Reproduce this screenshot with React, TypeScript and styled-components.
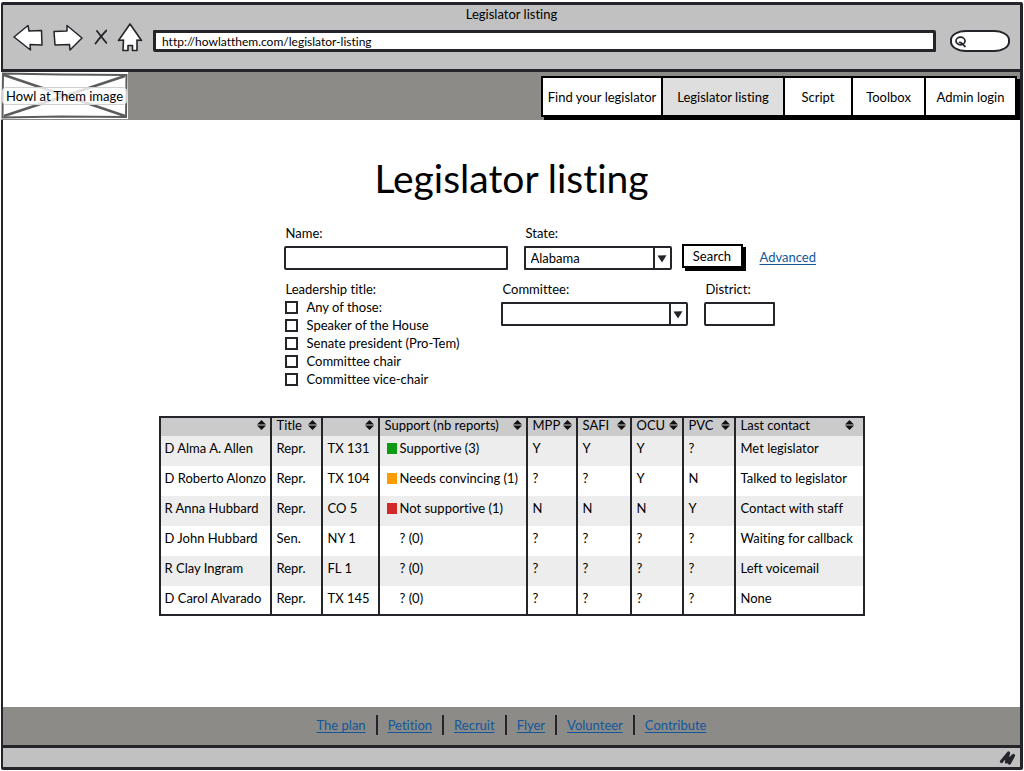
import React from "react";
import styled, { createGlobalStyle } from "styled-components";

const ink = "#24252b";
const chrome = "#c1c1c1";
const band = "#8d8b88";
const link = "#10579c";

const GlobalStyle = createGlobalStyle`
  *, *::before, *::after { box-sizing: border-box; }
  body { margin: 0; background: #fff; }
  body, button, input, select {
    font-family: Lato, "Liberation Sans", sans-serif;
    font-size: 13px;
    line-height: 16px;
    font-variant-ligatures: none;
    color: #000;
  }
`;

const Window = styled.div`
  display: flex;
  flex-direction: column;
  min-height: calc(100vh - 3px);
  margin: 2px 1px 1px;
  border: 3px solid ${ink};
  border-width: 3px 3px 3px 2px;
  border-radius: 2px;
  background: #fff;
`;

const TitleBar = styled.div`
  height: 67px;
  background: ${chrome};
  border-bottom: 3px solid ${ink};
`;

const WindowTitle = styled.div`
  padding-top: 1px;
  text-align: center;
`;

const Toolbar = styled.div`
  display: flex;
  align-items: flex-end;
  gap: 10px;
  height: 30px;
  padding: 0 10px;
`;

const IconButton = styled.button`
  display: flex;
  padding: 0;
  border: 0;
  background: none;
`;

const UrlInput = styled.input`
  flex: 1;
  min-width: 0;
  height: 22px;
  padding: 0 6px;
  margin-right: 4px;
  border: 3px solid ${ink};
  border-radius: 1px 2px 1px 2px;
  background: #fff;
  font-size: 12px;
`;

const SearchPill = styled.label`
  display: flex;
  align-items: center;
  width: 60px;
  height: 22px;
  padding-left: 3px;
  border: 2px solid ${ink};
  border-radius: 16px / 10px;
  background: #fff;
`;

const PillInput = styled.input`
  flex: 1;
  width: 0;
  padding: 0;
  border: 0;
  background: none;
  outline: none;
`;

const Header = styled.header`
  display: flex;
  justify-content: space-between;
  height: 48px;
  margin-left: -2px;
  background: ${band};
`;

const Logo = styled.div`
  display: grid;
  place-items: center;
  width: 127px;
  height: 47px;
  background: #fff;
  > * { grid-area: 1 / 1; }
`;

const LogoLabel = styled.span`
  width: 125px;
  border: 1px solid #d0d0d0;
  border-radius: 4px;
  background: rgba(255, 255, 255, 0.8);
  text-align: center;
  white-space: nowrap;
`;

const Nav = styled.nav`
  display: flex;
  height: 41px;
  margin: 4px 3px 0 0;
  border: 2px solid #000;
  background: #fff;
  box-shadow: 3px 3px 0 #000;
`;

const NavLink = styled.a<{ $width: number; $active?: boolean }>`
  display: flex;
  align-items: center;
  justify-content: center;
  width: ${(p) => p.$width}px;
  background: ${(p) => (p.$active ? "#dedede" : "#fff")};
  color: #000;
  text-decoration: none;
  white-space: nowrap;
  & + & { border-left: 2px solid #000; }
`;

const Main = styled.main`
  flex: 1;
  width: 706px;
  max-width: 100%;
  margin: 0 auto;
  padding-bottom: 40px;
`;

const Heading = styled.h1`
  margin: 34px 0 23px;
  font-size: 39px;
  line-height: 48px;
  font-weight: 400;
  text-align: center;
`;

const Form = styled.form`
  padding-left: 125px;
`;

const FormRow = styled.div`
  display: flex;
  align-items: flex-end;
  gap: 16px;
  margin-bottom: 11px;
`;

const FilterRow = styled.div`
  display: flex;
  align-items: flex-start;
  gap: 16px;
`;

const Field = styled.label<{ $width: number }>`
  display: flex;
  flex-direction: column;
  gap: 5px;
  width: ${(p) => p.$width}px;
`;

const FieldName = styled.span`
  padding-left: 2px;
`;

const TextInput = styled.input`
  width: 100%;
  height: 24px;
  padding: 0 5px;
  border: 2px solid ${ink};
  border-radius: 2px 1px 1px 2px;
  background: #fff;
`;

const SelectBox = styled.span`
  display: flex;
  height: 24px;
  border: 2px solid ${ink};
  border-radius: 1px 2px 2px 1px;
`;

const Select = styled.select`
  flex: 1;
  min-width: 0;
  padding: 0 5px;
  border: 0;
  background: #fff;
  appearance: none;
`;

const SelectArrow = styled.span`
  display: flex;
  align-items: center;
  justify-content: center;
  width: 17px;
  border-left: 2px solid ${ink};
`;

const SearchButton = styled.button`
  width: 61px;
  height: 24px;
  margin: 0 3px 2px -6px;
  padding: 0;
  border: 2px solid #000;
  background: #fff;
  box-shadow: 3px 3px 0 #000;
`;

const TextLink = styled.a`
  color: ${link};
  text-decoration: underline;
  text-underline-offset: 2px;
`;

const AdvancedLink = styled(TextLink)`
  margin-bottom: 5px;
  margin-left: -2px;
`;

const Fieldset = styled.fieldset`
  width: 201px;
  margin: 0;
  padding: 0;
  border: 0;
`;

const Legend = styled.legend`
  padding: 0 0 1px 2px;
`;

const CheckRow = styled.label`
  display: flex;
  align-items: center;
  gap: 9px;
  height: 18px;
  padding-left: 1px;
`;

const Checkbox = styled.input`
  width: 13px;
  height: 13px;
  margin: 0;
  border: 2px solid ${ink};
  background: #fff;
  appearance: none;
  &:checked { background: ${ink}; }
`;

const Table = styled.table`
  width: 100%;
  margin-top: 28px;
  border: 2px solid ${ink};
  border-collapse: separate;
  border-spacing: 0;
  table-layout: fixed;
`;

const Col = styled.col<{ $width: number }>`
  width: ${(p) => p.$width}px;
`;

const HeadCell = styled.th`
  height: 18px;
  padding: 0 4px 4px;
  background: #cbcbcb;
  font-weight: 400;
  line-height: 14px;
  text-align: left;
  white-space: nowrap;
  & + & {
    padding-left: 5px;
    border-left: 2px solid ${ink};
  }
  &:last-child { padding-right: 9px; }
`;

const HeadContent = styled.div`
  display: flex;
  justify-content: space-between;
  align-items: center;
  height: 14px;
`;

const Row = styled.tr`
  &:nth-child(odd) { background: #ededed; }
`;

const Cell = styled.td`
  height: 30px;
  padding: 4px 0 10px 4px;
  white-space: nowrap;
  & + & {
    padding-left: 5px;
    border-left: 2px solid ${ink};
  }
  tr:last-child > & { height: 28px; padding-bottom: 8px; }
`;

const Support = styled.span`
  display: flex;
  align-items: center;
  gap: 3px;
  padding-left: 2px;
`;

const Swatch = styled.span<{ $color: string }>`
  width: 10px;
  height: 11px;
  background: ${(p) => p.$color};
`;

const Footer = styled.footer`
  display: flex;
  align-items: center;
  justify-content: center;
  height: 38px;
  padding-bottom: 2px;
  background: ${band};
`;

const FooterLink = styled(TextLink)`
  margin: 0 10px;
`;

const Divider = styled.span`
  width: 2px;
  height: 20px;
  background: ${ink};
`;

const StatusBar = styled.div`
  display: flex;
  align-items: center;
  justify-content: flex-end;
  height: 22px;
  padding-right: 4px;
  border-top: 3px solid ${ink};
  background: ${chrome};
`;

const BackIcon = () => (
  <svg width="30" height="28" viewBox="0 0 30 28" fill="#fff" stroke={ink} strokeWidth="1.5" strokeLinejoin="round">
    <path d="M1 13 15 1.500l1 5.500 12.500-.500.500 14.500-12-.500.500 5.500Z" />
  </svg>
);

const ForwardIcon = () => (
  <svg width="30" height="28" viewBox="0 0 30 28" fill="#fff" stroke={ink} strokeWidth="1.5" strokeLinejoin="round">
    <path d="M1 7.500 14 7V1.500L29 14 17 26l-.500-5.500L2 21Z" />
  </svg>
);

const StopIcon = () => (
  <svg width="14" height="28" viewBox="0 0 14 28" fill="none" stroke={ink} strokeWidth="1.8" strokeLinecap="round">
    <path d="M4 7c3 4 6 8 9.500 12M13.500 6.500C10 10 6 15 2.500 19.500" />
  </svg>
);

const HomeIcon = () => (
  <svg width="26" height="30" viewBox="0 0 26 30" fill="#fff" stroke={ink} strokeWidth="1.6" strokeLinejoin="round">
    <path d="M13 2 1.500 18.500 6.500 18 6 28.500h5V23.500h4.500v5h4.500V18l4.500.500Z" />
  </svg>
);

const MagnifierIcon = () => (
  <svg width="13" height="14" viewBox="0 0 13 14" fill="none" stroke={ink} strokeWidth="1.700" strokeLinecap="round">
    <ellipse cx="5.500" cy="7" rx="4.500" ry="3.800" />
    <path d="M4.500 8.500c2-.500 3 2 5.500 4" />
  </svg>
);

const CrossedBox = () => (
  <svg width="127" height="47" viewBox="0 0 127 47" fill="none" stroke="#5c5c5e" strokeWidth="2" aria-hidden="true">
    <path d="M2 1.500 60 2.500 125.500 3l-.500 42L60 44.500 1.500 45.500Z" />
    <path d="M3 3 124 44M3 44 124 4" strokeWidth="2.500" />
  </svg>
);

const ArrowDown = () => (
  <svg width="10" height="9" viewBox="0 0 10 9" fill={ink} aria-hidden="true">
    <path d="M.5 1.500 9.500 1.300 5 8.500Z" />
  </svg>
);

const SortIcon = () => (
  <svg width="9" height="10" viewBox="0 0 9 10" fill="#111" aria-hidden="true">
    <path d="M0 4.500 4.500 0 9 4.500ZM0 5.500h9L4.500 10Z" />
  </svg>
);

const ResizeGrip = () => (
  <svg width="17" height="16" viewBox="0 0 17 16" fill="none" stroke={ink} strokeWidth="3.200" strokeLinecap="round" strokeLinejoin="round" aria-hidden="true">
    <path d="M2.500 11.500 9.500 3 7.500 12 14.500 5.500 10.500 13" />
  </svg>
);

const navItems = [
  { label: "Find your legislator", width: 118 },
  { label: "Legislator listing", width: 122, active: true },
  { label: "Script", width: 68 },
  { label: "Toolbox", width: 73 },
  { label: "Admin login", width: 91 },
];

const titles = [
  "Any of those:",
  "Speaker of the House",
  "Senate president (Pro-Tem)",
  "Committee chair",
  "Committee vice-chair",
];

const columns = [
  { label: "", width: 109 },
  { label: "Title", width: 51 },
  { label: "", width: 57 },
  { label: "Support (nb reports)", width: 148 },
  { label: "MPP", width: 50 },
  { label: "SAFI", width: 54 },
  { label: "OCU", width: 52 },
  { label: "PVC", width: 52 },
  { label: "Last contact", width: 129 },
];

const legislators = [
  { name: "D Alma A. Allen", title: "Repr.", seat: "TX 131", color: "#0a9b12", support: "Supportive (3)", votes: ["Y", "Y", "Y", "?"], contact: "Met legislator" },
  { name: "D Roberto Alonzo", title: "Repr.", seat: "TX 104", color: "#ff9c00", support: "Needs convincing (1)", votes: ["?", "?", "Y", "N"], contact: "Talked to legislator" },
  { name: "R Anna Hubbard", title: "Repr.", seat: "CO 5", color: "#d22a2a", support: "Not supportive (1)", votes: ["N", "N", "N", "Y"], contact: "Contact with staff" },
  { name: "D John Hubbard", title: "Sen.", seat: "NY 1", color: "transparent", support: "? (0)", votes: ["?", "?", "?", "?"], contact: "Waiting for callback" },
  { name: "R Clay Ingram", title: "Repr.", seat: "FL 1", color: "transparent", support: "? (0)", votes: ["?", "?", "?", "?"], contact: "Left voicemail" },
  { name: "D Carol Alvarado", title: "Repr.", seat: "TX 145", color: "transparent", support: "? (0)", votes: ["?", "?", "?", "?"], contact: "None" },
];

const footerLinks = ["The plan", "Petition", "Recruit", "Flyer", "Volunteer", "Contribute"];

export default function App() {
  return (
    <>
      <GlobalStyle />
      <Window>
        <TitleBar>
          <WindowTitle>Legislator listing</WindowTitle>
          <Toolbar>
            <IconButton aria-label="Back"><BackIcon /></IconButton>
            <IconButton aria-label="Forward"><ForwardIcon /></IconButton>
            <IconButton aria-label="Stop"><StopIcon /></IconButton>
            <IconButton aria-label="Home"><HomeIcon /></IconButton>
            <UrlInput aria-label="Address" defaultValue="http://howlatthem.com/legislator-listing" />
            <SearchPill>
              <MagnifierIcon />
              <PillInput aria-label="Web search" />
            </SearchPill>
          </Toolbar>
        </TitleBar>

        <Header>
          <Logo>
            <CrossedBox />
            <LogoLabel>Howl at Them image</LogoLabel>
          </Logo>
          <Nav>
            {navItems.map((n) => (
              <NavLink key={n.label} href="#" $width={n.width} $active={n.active}>{n.label}</NavLink>
            ))}
          </Nav>
        </Header>

        <Main>
          <Heading>Legislator listing</Heading>
          <Form>
            <FormRow>
              <Field $width={224}>
                <FieldName>Name:</FieldName>
                <TextInput />
              </Field>
              <Field $width={148}>
                <FieldName>State:</FieldName>
                <SelectBox>
                  <Select defaultValue="Alabama"><option>Alabama</option></Select>
                  <SelectArrow><ArrowDown /></SelectArrow>
                </SelectBox>
              </Field>
              <SearchButton type="button">Search</SearchButton>
              <AdvancedLink href="#">Advanced</AdvancedLink>
            </FormRow>
            <FilterRow>
              <Fieldset>
                <Legend>Leadership title:</Legend>
                {titles.map((t) => (
                  <CheckRow key={t}>
                    <Checkbox type="checkbox" />
                    {t}
                  </CheckRow>
                ))}
              </Fieldset>
              <Field $width={187}>
                <FieldName>Committee:</FieldName>
                <SelectBox>
                  <Select><option></option></Select>
                  <SelectArrow><ArrowDown /></SelectArrow>
                </SelectBox>
              </Field>
              <Field $width={71}>
                <FieldName>District:</FieldName>
                <TextInput />
              </Field>
            </FilterRow>
          </Form>

          <Table>
            <colgroup>
              {columns.map((c, i) => <Col key={i} $width={c.width} />)}
            </colgroup>
            <thead>
              <tr>
                {columns.map((c, i) => (
                  <HeadCell key={i}>
                    <HeadContent>
                      <span>{c.label}</span>
                      <IconButton aria-label="Sort"><SortIcon /></IconButton>
                    </HeadContent>
                  </HeadCell>
                ))}
              </tr>
            </thead>
            <tbody>
              {legislators.map((l) => (
                <Row key={l.name}>
                  <Cell>{l.name}</Cell>
                  <Cell>{l.title}</Cell>
                  <Cell>{l.seat}</Cell>
                  <Cell>
                    <Support><Swatch $color={l.color} />{l.support}</Support>
                  </Cell>
                  {l.votes.map((v, i) => <Cell key={i}>{v}</Cell>)}
                  <Cell>{l.contact}</Cell>
                </Row>
              ))}
            </tbody>
          </Table>
        </Main>

        <Footer>
          {footerLinks.map((f, i) => (
            <React.Fragment key={f}>
              {i > 0 && <Divider />}
              <FooterLink href="#">{f}</FooterLink>
            </React.Fragment>
          ))}
        </Footer>
        <StatusBar><ResizeGrip /></StatusBar>
      </Window>
    </>
  );
}
